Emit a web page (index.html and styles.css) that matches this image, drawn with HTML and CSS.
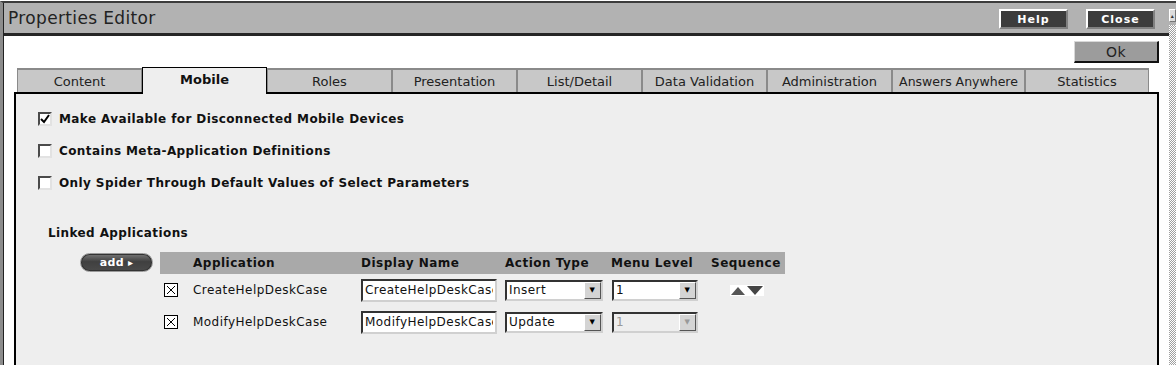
FILE: index.html
```html
<!DOCTYPE html>
<html lang="en">
<head>
  <meta charset="UTF-8"/>
  <title>Properties Editor</title>
  <link rel="stylesheet" href="styles.css">
</head>
<body>

  <div class="window">
    <div class="frame">
      <div class="titlebar">
        <span class="title">Properties Editor</span>
        <div class="title-btns">
          <button class="tb-btn">Help</button>
          <button class="tb-btn">Close</button>
        </div>
      </div>

      <div class="content">
        <div class="ok-row"><button class="ok-btn">Ok</button></div>

        <div class="tabs">
          <div class="tab">Content</div>
          <div class="tab active">Mobile</div>
          <div class="tab">Roles</div>
          <div class="tab">Presentation</div>
          <div class="tab">List/Detail</div>
          <div class="tab">Data Validation</div>
          <div class="tab">Administration</div>
          <div class="tab wide">Answers Anywhere</div>
          <div class="tab last">Statistics</div>
        </div>

        <div class="panel">
          <label class="opt">
            <span class="cb">
              <svg width="10" height="10" viewBox="0 0 10 10"><path d="M1 5 L4 8 L9 1" fill="none" stroke="#000" stroke-width="2"/></svg>
            </span>
            Make Available for Disconnected Mobile Devices
          </label>
          <label class="opt"><span class="cb"></span>Contains Meta-Application Definitions</label>
          <label class="opt"><span class="cb"></span>Only Spider Through Default Values of Select Parameters</label>

          <div class="section-title">Linked Applications</div>

          <div class="linked">
            <button class="add-btn">add <span class="add-arrow">&#9656;</span></button>

            <div class="apps">
              <div class="apps-head">
                <div></div>
                <div>Application</div>
                <div>Display Name</div>
                <div>Action Type</div>
                <div>Menu Level</div>
                <div>Sequence</div>
              </div>

              <div class="apps-row">
                <div><span class="xbox"><svg width="12" height="12" viewBox="0 0 12 12"><path d="M2 2 L10 10 M10 2 L2 10" stroke="#000" stroke-width="1"/></svg></span></div>
                <div>CreateHelpDeskCase</div>
                <div><input class="field" type="text" value="CreateHelpDeskCase"></div>
                <div><div class="sel action"><span class="sel-val">Insert</span><span class="sel-btn">&#9660;</span></div></div>
                <div><div class="sel menu"><span class="sel-val">1</span><span class="sel-btn">&#9660;</span></div></div>
                <div>
                  <svg class="seq" width="34" height="11" viewBox="0 0 34 11">
                    <rect width="34" height="11" fill="#fff"/>
                    <polygon points="1,10 8,2 15,10" fill="#555"/>
                    <polygon points="17,1 33,1 25,10" fill="#444"/>
                  </svg>
                </div>
              </div>

              <div class="apps-row">
                <div><span class="xbox"><svg width="12" height="12" viewBox="0 0 12 12"><path d="M2 2 L10 10 M10 2 L2 10" stroke="#000" stroke-width="1"/></svg></span></div>
                <div>ModifyHelpDeskCase</div>
                <div><input class="field" type="text" value="ModifyHelpDeskCase"></div>
                <div><div class="sel action"><span class="sel-val">Update</span><span class="sel-btn">&#9660;</span></div></div>
                <div><div class="sel menu disabled"><span class="sel-val">1</span><span class="sel-btn">&#9660;</span></div></div>
                <div></div>
              </div>
            </div>
          </div>
        </div>
      </div>
    </div>

    <div class="scrollbar">
      <div class="sb-up">&#9652;</div>
      <div class="sb-track"></div>
    </div>
  </div>

</body>
</html>
```

FILE: styles.css
```css
* { box-sizing:border-box; }
body {
  margin:0; background:#fff; overflow:hidden;
  font-family:"DejaVu Sans", Verdana, sans-serif; font-size:12px; color:#111;
  letter-spacing:0.45px;
}

.window {
  display:flex; height:364px; margin-top:1px;
  border-top:2px solid #3c3c3c; border-left:3px solid #8c8c8c;
}
.frame { flex:1; min-width:0; display:flex; flex-direction:column; border-left:1px solid #222; }

.titlebar {
  height:33px; display:flex; align-items:center; justify-content:space-between;
  background:#b2b2b2; border-bottom:3px solid #262626; padding:0 14px 0 4px;
}
.title { font-size:17px; color:#222; letter-spacing:0.35px; }
.title-btns { display:flex; gap:18px; padding-top:2px; }
.tb-btn {
  width:69px; height:20px; padding:0; background:#3c3c3c; color:#fff;
  border:2px solid; border-color:#fff #808080 #808080 #fff;
  font:bold 11px "DejaVu Sans", Verdana, sans-serif; letter-spacing:1px;
}

.content { flex:1; display:flex; flex-direction:column; padding:5px 10px 0; }
.ok-row { display:flex; justify-content:flex-end; }
.ok-btn {
  width:85px; height:22px; padding:0; background:#9c9c9c; color:#222;
  border-style:solid; border-width:1px 2px 2px 1px; border-color:#d8d8d8 #111 #111 #d8d8d8;
  font:14px "DejaVu Sans", Verdana, sans-serif; letter-spacing:0.5px;
}

.tabs {
  display:flex; align-items:flex-end; height:27px; margin:4px 0 -2px 3px;
  position:relative; z-index:1;
}
.tab {
  width:125px; height:24px; margin-bottom:2px; background:#c8c8c8;
  border:1px solid #8a8a8a; border-top-width:2px; border-bottom:none;
  display:flex; align-items:center; justify-content:center;
  font-size:13px; color:#222; white-space:nowrap; letter-spacing:0;
}
.tab.active {
  height:27px; margin-bottom:0; padding-bottom:3px; background:#eee;
  border:1px solid #000; border-bottom:none; font-weight:bold; color:#111;
}
.tab.wide { width:133px; font-size:12.5px; }
.tab.last { width:124px; }

.panel {
  flex:1; background:#eee; border:2px solid #000; border-bottom:none;
  padding:9px 0 0 22px;
}
.opt { display:flex; align-items:center; gap:7px; height:32px; font-weight:bold; letter-spacing:0.4px; }
.cb {
  width:14px; height:14px; background:#fff;
  border:2px solid; border-color:#4a4a4a #e2e2e2 #e2e2e2 #4a4a4a;
  display:flex; align-items:center; justify-content:center;
}
.section-title { height:16px; line-height:16px; margin:26px 0 11px 10px; font-weight:bold; letter-spacing:0.4px; }

.linked { display:flex; align-items:flex-start; margin-left:42px; }
.add-btn {
  width:73px; height:19px; margin:1px 7px 0 0; padding:0 0 1px; border-radius:10px;
  background:linear-gradient(#777, #404040 45%, #4a4a4a); border:1px solid #9a9a9a;
  box-shadow:inset 0 0 0 1px #333; color:#fff;
  font:bold 11px "DejaVu Sans", Verdana, sans-serif; letter-spacing:0.3px;
}
.add-arrow { font-size:10px; }

.apps-head, .apps-row {
  display:grid; grid-template-columns:33px 168px 144px 106px 100px 74px; align-items:center;
}
.apps-head { height:22px; background:#a9a9a9; font-weight:bold; letter-spacing:0.5px; }
.apps-row { height:32px; }

.xbox {
  width:14px; height:14px; margin-left:4px; background:#fff; border:1px solid #000;
  display:flex; align-items:center; justify-content:center;
}
.field {
  width:136px; height:23px; margin:0; padding:0 2px; background:#fff;
  border:2px solid; border-color:#333 #d0d0d0 #d0d0d0 #333;
  font:12px "DejaVu Sans", Verdana, sans-serif; letter-spacing:0.45px; color:#111;
}
.sel {
  height:21px; display:flex; align-items:center; background:#fff;
  border:2px solid; border-color:#333 #d0d0d0 #d0d0d0 #333;
}
.sel.action { width:98px; }
.sel.menu { width:86px; margin-left:1px; }
.sel-val { flex:1; padding-left:2px; }
.sel-btn {
  width:17px; height:17px; background:#d4d4d4; font-size:7px; color:#000;
  border:1px solid; border-color:#fff #555 #555 #fff;
  display:flex; align-items:center; justify-content:center;
}
.sel.disabled { background:#eee; color:#999; }
.sel.disabled .sel-btn { color:#999; }
.seq { display:block; margin-left:19px; }

.scrollbar { width:7px; display:flex; flex-direction:column; background:#b2b2b2; padding-top:6px; }
.sb-up {
  height:13px; background:#ddd; border:1px solid; border-color:#fff #777 #777 #fff;
  font-size:6px; line-height:11px; text-align:center; color:#333; overflow:hidden;
}
.sb-track {
  flex:1; margin-top:3px;
  background:repeating-conic-gradient(#a0a0a0 0 25%, #fff 0 50%) 0 0 / 2px 2px;
}
```
